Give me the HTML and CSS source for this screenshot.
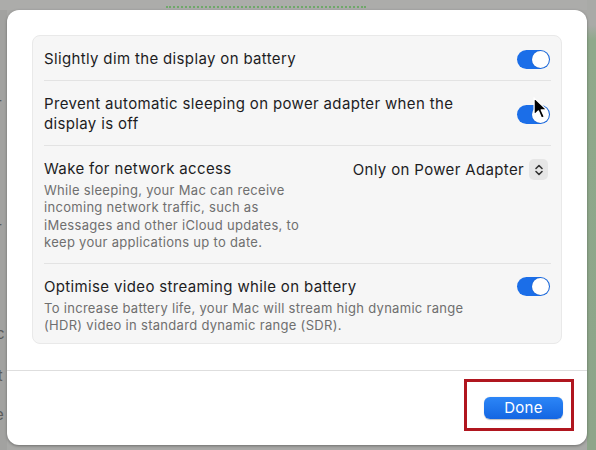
FILE: index.html
```html
<!DOCTYPE html>
<html>
<head>
    <link rel="stylesheet" href="styles.css">
    <title>Battery Options</title>
</head>
<body>
    <div class="desk">
        <div class="desk-left">
            <span class="ghost g1">r</span>
            <span class="ghost g2">r</span>
            <span class="ghost g3">c</span>
            <span class="ghost g4">it</span>
            <span class="ghost g5">e</span>
        </div>
        <div class="desk-top"><span class="dots"></span></div>
        <div class="desk-right"></div>

        <div class="sheet">
            <div class="group">
                <div class="row">
                    <div class="text">
                        <div class="title">Slightly dim the display on battery</div>
                    </div>
                    <span class="switch on"></span>
                </div>
                <div class="row">
                    <div class="text">
                        <div class="title">Prevent automatic sleeping on power adapter when the display is off</div>
                    </div>
                    <span class="switch on"></span>
                </div>
                <div class="row top">
                    <div class="text">
                        <div class="title">Wake for network access</div>
                        <div class="desc">While sleeping, your Mac can receive incoming network traffic, such as iMessages and other iCloud updates, to keep your applications up to date.</div>
                    </div>
                    <div class="popup">
                        <span>Only on Power Adapter</span>
                        <span class="stepper">
                            <svg width="10" height="14" viewBox="0 0 10 14">
                                <path d="M2 5.5 L5 2.5 L8 5.5 M2 8.5 L5 11.5 L8 8.5" fill="none" stroke="#333" stroke-width="1.6" stroke-linecap="round" stroke-linejoin="round"/>
                            </svg>
                        </span>
                    </div>
                </div>
                <div class="row top">
                    <div class="text">
                        <div class="title">Optimise video streaming while on battery</div>
                        <div class="desc wide">To increase battery life, your Mac will stream high dynamic range (HDR) video in standard dynamic range (SDR).</div>
                    </div>
                    <span class="switch on"></span>
                </div>
            </div>

            <div class="footer">
                <div class="mark">
                    <button class="done">Done</button>
                </div>
            </div>
        </div>

        <!-- mouse pointer over the second switch -->
        <svg class="pointer" width="15" height="25" viewBox="0 0 14 22">
            <path d="M1 1 L1 17 L5 13.2 L8 20 L10.6 18.8 L7.7 12.3 L12.8 12.3 Z" fill="#000" stroke="#fff" stroke-width="1.2" stroke-linejoin="round"/>
        </svg>
    </div>
</body>
</html>
```

FILE: styles.css
```css
html, body {margin: 0; padding: 0;}
body {background-color: #a9a9a7; font-family: Inter, "Liberation Sans", sans-serif; color: #1d1d1f;}

.desk {position: relative; width: 596px; height: 450px; overflow: hidden; padding: 10px 9px 5px 7px; box-sizing: border-box;}
.desk-left {position: absolute; left: 0; top: 0; width: 7px; height: 450px; background: #a2a2a0;}
.ghost {position: absolute; left: -4px; font-size: 15px; color: #5a5a5a;}
.g1 {top: 94px;}
.g2 {top: 218px;}
.g3 {top: 324px;}
.g4 {top: 366px; left: -6px;}
.g5 {top: 405px; left: -5px;}
.desk-top {position: absolute; left: 0; top: 0; width: 596px; height: 10px; background: #acacaa;}
.dots {position: absolute; left: 166px; top: 6px; width: 200px; height: 2px; border-top: 2px dotted #6fa86a;}
.desk-right {position: absolute; right: 0; top: 0; width: 9px; height: 450px; background: linear-gradient(#a9aaa7 0, #a9aaa7 25px, #8fa98b 40px, #8ea58a 100%);}

.sheet {position: relative; height: 435px; background: #fff; border-radius: 12px; box-shadow: 0 1px 3px rgba(0,0,0,0.35); display: flex; flex-direction: column;}

.group {margin: 25px 25px 0 25px; background: #f6f6f6; border: 1px solid #e9e9e9; border-radius: 8px; padding: 0 10px 0 11px;}
.row {display: flex; align-items: center; justify-content: space-between; padding: 13px 0 11px 0; border-bottom: 1px solid #e3e3e3;}
.row:last-child {border-bottom: none; padding-bottom: 8px;}
.row.top {align-items: flex-start;}
.row.top:nth-child(3) {padding-bottom: 12px;}
.text {flex: 1; padding-right: 20px;}
.title {font-size: 15px; line-height: 20px; letter-spacing: 0.35px; color: #1d1d1f;}
.desc {font-size: 13px; line-height: 17.3px; letter-spacing: 0.3px; color: #6f6f6f; margin-top: 3px; max-width: 268px;}
.desc.wide {max-width: 440px;}

.switch {position: relative; width: 33px; height: 19px; border-radius: 10px; background: #1b6ee8; flex: none; margin-right: 1px;}
.switch::after {content: ""; position: absolute; right: 1px; top: 1px; width: 17px; height: 17px; border-radius: 50%; background: #fff; box-shadow: 0 0 1px rgba(0,0,0,0.3);}

.popup {display: flex; align-items: center; gap: 5px; margin-right: 3px; font-size: 15px; line-height: 20px; letter-spacing: 0.35px; color: #1d1d1f;}
.stepper {display: flex; align-items: center; justify-content: center; width: 19px; height: 21px; background: #e6e6e6; border-radius: 5px;}

.footer {margin-top: 26px; border-top: 1px solid #dedede; flex: 1; display: flex; align-items: center; justify-content: flex-end; padding-right: 13px;}
.mark {border: 3px solid #b0161f; padding: 15px 8px 9px 17px; margin-top: -6px;}
.done {display: block; width: 79px; height: 22px; border: none; border-radius: 6px; background: linear-gradient(#2c86f7, #1466e2); color: #fff; font-family: Inter, "Liberation Sans", sans-serif; font-size: 15px; letter-spacing: 0.3px; padding: 0; box-shadow: 0 0.5px 1px rgba(0,0,0,0.25);}

.pointer {position: absolute; left: 533px; top: 96px;}
```
